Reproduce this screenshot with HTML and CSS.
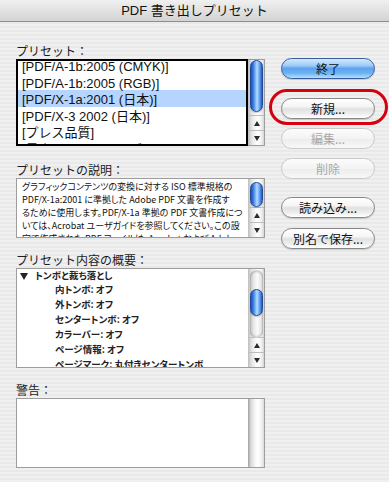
FILE: index.html
```html
<!DOCTYPE html>
<html lang="ja">
<head>
<meta charset="utf-8">
<title>PDF 書き出しプリセット</title>
<link rel="stylesheet" href="styles.css">
</head>
<body>
<div class="window">
  <div class="titlebar">PDF 書き出しプリセット</div>
  <div class="content">
    <div class="left">
      <div class="label first">プリセット：</div>
      <div class="box presets">
        <div class="listarea">
          <div class="rows">
            <div class="row">[PDF/A-1b:2005 (CMYK)]</div>
            <div class="row">[PDF/A-1b:2005 (RGB)]</div>
            <div class="row selected">[PDF/X-1a:2001 (日本)]</div>
            <div class="row">[PDF/X-3 2002 (日本)]</div>
            <div class="row">[プレス品質]</div>
            <div class="row">[最小ファイルサイズ]</div>
          </div>
        </div>
        <div class="scrollbar">
          <div class="track"><div class="thumb t-presets"></div></div>
          <div class="arrow up"></div>
          <div class="arrow down"></div>
        </div>
      </div>

      <div class="label l-desc">プリセットの説明：</div>
      <div class="box desc">
        <div class="desc-text">グラフィックコンテンツの変換に対する ISO 標準規格の<br>PDF/X-1a:2001 に準拠した Adobe PDF 文書を作成す<br>るために使用します。PDF/X-1a 準拠の PDF 文書作成につ<br>いては、Acrobat ユーザガイドを参照してください。この設<br>定で作成された PDF ファイルは、Acrobat および Adobe</div>
        <div class="scrollbar">
          <div class="track"><div class="thumb t-desc"></div></div>
          <div class="arrow up"></div>
          <div class="arrow down"></div>
        </div>
      </div>

      <div class="label l-over">プリセット内容の概要：</div>
      <div class="box overview">
        <div class="tree">
          <div class="node top"><span class="disclosure"></span>トンボと裁ち落とし</div>
          <div class="node child">内トンボ: オフ</div>
          <div class="node child">外トンボ: オフ</div>
          <div class="node child">センタートンボ: オフ</div>
          <div class="node child">カラーバー: オフ</div>
          <div class="node child">ページ情報: オフ</div>
          <div class="node child">ページマーク: 丸付きセンタートンボ</div>
        </div>
        <div class="scrollbar">
          <div class="track"><div class="groove"><div class="thumb t-over"></div></div></div>
          <div class="arrow up"></div>
          <div class="arrow down"></div>
        </div>
      </div>

      <div class="label l-warn">警告：</div>
      <div class="box warn">
        <div class="warn-area"></div>
        <div class="scrollbar"><div class="track"></div></div>
      </div>
    </div>

    <div class="right">
      <button class="btn default">終了</button>
      <button class="btn gap-lg">新規...</button>
      <button class="btn disabled gap-sm">編集...</button>
      <button class="btn disabled gap-sm">削除</button>
      <button class="btn gap-md">読み込み...</button>
      <button class="btn gap-sm2">別名で保存...</button>
    </div>
  </div>
  <div class="ring"></div>
</div>
</body>
</html>
```

FILE: styles.css
```css
* { box-sizing: border-box; }
html, body { margin: 0; padding: 0; }
body {
  width: 389px;
  height: 482px;
  overflow: hidden;
  font-family: "Liberation Sans", "Noto Sans CJK JP", sans-serif;
  color: #000;
}
.window {
  position: relative;
  width: 389px;
  height: 482px;
  background: repeating-linear-gradient(to bottom, #f0f0f0 0, #f0f0f0 2px, #e9e9e9 2px, #e9e9e9 4px);
}
.titlebar {
  height: 22px;
  border-bottom: 1px solid #8e8e8e;
  background: linear-gradient(to bottom, #f0f0f0, #d3d3d3);
  font-size: 13px;
  line-height: 21px;
  text-align: center;
  color: #111;
}
.content {
  display: flex;
  padding-left: 16px;
}
.left {
  width: 249px;
  display: flex;
  flex-direction: column;
}
.label {
  font-family: "Noto Sans CJK JP", sans-serif;
  font-size: 12px;
  line-height: 17px;
  height: 18px;
  padding-top: 1px;
  color: #1c1c1c;
}
.label.first { margin-top: 19px; }
.label.l-desc { margin-top: 14px; }
.label.l-over { margin-top: 12px; }
.label.l-warn { margin-top: 13px; height: 17px; line-height: 16px; }

.box {
  display: flex;
  border: 1px solid #9d9d9d;
  background: #fff;
  overflow: hidden;
}
.presets { height: 87px; overflow: visible; }
.desc { height: 60px; }
.overview { height: 100px; }
.warn { height: 70px; }

.listarea {
  flex: 1;
  margin: -1px 0 -1px -1px;
  border: 2px solid #000;
  overflow: hidden;
}
.rows { margin-top: -4px; }
.row {
  height: 16.5px;
  line-height: 16px;
  padding: 2px 0 0 4px;
  font-size: 13px;
  white-space: nowrap;
  color: #111;
}
.row.selected { background: #b5d5ff; }

.desc-text {
  flex: 1;
  overflow: hidden;
  padding: 1px 0 0 5px;
  font-family: "Noto Sans CJK JP", sans-serif;
  font-size: 9px;
  font-feature-settings: "palt";
  line-height: 13px;
  white-space: nowrap;
  color: #111;
}

.tree {
  flex: 1;
  overflow: hidden;
  font-family: "Noto Sans CJK JP", sans-serif;
  font-size: 9.5px;
  font-weight: 700;
  font-feature-settings: "palt";
  color: #222;
  white-space: nowrap;
}
.node { height: 15px; line-height: 15px; }
.node.top {
  height: 13px;
  line-height: 13px;
  padding-left: 3px;
  display: flex;
  align-items: center;
}
.node.child { padding-left: 38px; }
.disclosure {
  flex: none;
  width: 0;
  height: 0;
  border-left: 4.5px solid transparent;
  border-right: 4.5px solid transparent;
  border-top: 7px solid #222;
  margin: 2px 7px 0 0;
}

.warn-area { flex: 1; }

.scrollbar {
  width: 16px;
  display: flex;
  flex-direction: column;
  border-left: 1px solid #c2c2c2;
  background: linear-gradient(to right, #c9c9c9 0%, #e6e6e6 20%, #f8f8f8 45%, #ffffff 60%, #eeeeee 85%, #d4d4d4 100%);
}
.warn .scrollbar {
  border-left-color: #a9a9a9;
  background: linear-gradient(to right, #b8b8b8 0%, #dcdcdc 15%, #f6f6f6 40%, #ffffff 60%, #f0f0f0 85%, #dadada 100%);
}
.track {
  flex: 1;
  position: relative;
}
.groove {
  height: 100%;
  margin: 1px 1px 2px;
  border-radius: 7px;
  background: linear-gradient(to right, #c2c2c2 0%, #e4e4e4 25%, #fbfbfb 55%, #e8e8e8 85%, #c8c8c8 100%);
  box-shadow: inset 0 2px 2px rgba(0,0,0,0.18), inset 0 -2px 2px rgba(0,0,0,0.15);
  padding-top: 19px;
}
.thumb {
  width: 13px;
  margin-left: 1px;
  border-radius: 7px;
  border: 1px solid #24489a;
  background: linear-gradient(to right, #1d4eb6 0%, #3c80e2 22%, #8fc2fb 45%, #b6dbff 55%, #5b9cf0 80%, #2456c0 100%);
  box-shadow: 0 1px 1px rgba(0,0,0,0.2);
}
.groove .thumb { margin-left: 0; }
.t-presets { height: 52px; margin-top: 0; }
.t-desc { height: 25px; margin-top: 3px; }
.t-over { height: 27px; }

.arrow {
  height: 15px;
  border-top: 1px solid #bdbdbd;
  display: flex;
  align-items: center;
  justify-content: center;
}
.arrow::after {
  content: "";
  width: 0;
  height: 0;
  border-left: 3.5px solid transparent;
  border-right: 3.5px solid transparent;
}
.arrow.up::after { border-bottom: 5px solid #2a2a2a; }
.arrow.down::after { border-top: 5px solid #2a2a2a; }

.right {
  display: flex;
  flex-direction: column;
  margin-left: 16px;
  padding-top: 36px;
}
.btn {
  width: 94px;
  height: 21px;
  padding: 0;
  border-radius: 11px;
  border: 1px solid #878787;
  background: linear-gradient(to bottom, #ffffff 0%, #f5f5f5 40%, #e1e1e1 52%, #ececec 75%, #ffffff 100%);
  box-shadow: 0 1px 1px rgba(0,0,0,0.15);
  font-family: "Noto Sans CJK JP", sans-serif;
  font-size: 12px;
  line-height: 19px;
  color: #111;
  text-align: center;
}
.btn.default {
  border-color: #3a5c9e;
  background: linear-gradient(to bottom, #d4e9fd 0%, #9dcbf6 35%, #5ea2ed 50%, #6cb3f2 75%, #b4e2ff 100%);
}
.btn.disabled {
  border-color: #c9c9c9;
  color: #a8a8a8;
  background: linear-gradient(to bottom, #fcfcfc 0%, #f3f3f3 50%, #ededed 55%, #f8f8f8 100%);
  box-shadow: none;
}
.gap-lg { margin-top: 19px; }
.gap-sm { margin-top: 9px; }
.gap-md { margin-top: 18px; }
.gap-sm2 { margin-top: 10px; }

.ring {
  position: absolute;
  left: 269px;
  top: 89px;
  width: 119px;
  height: 36px;
  border: 3px solid #d4000f;
  border-radius: 18px;
}
```
